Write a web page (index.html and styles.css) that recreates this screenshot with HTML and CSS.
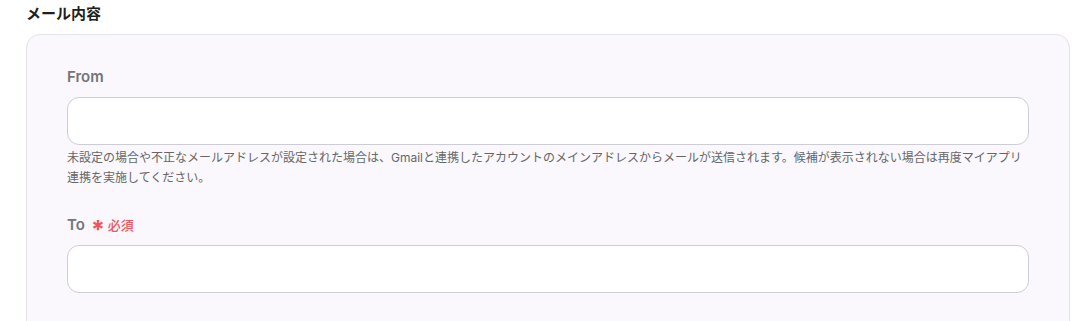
FILE: index.html
```html
<!DOCTYPE html>
<html lang="ja">
<head>
    <meta charset="UTF-8">
    <meta name="viewport" content="width=device-width, initial-scale=1.0">
    <title>メール内容</title>
    <link rel="stylesheet" href="styles.css">
</head>
<body>
    <div class="section">
        <h2 class="section-title">メール内容</h2>
        <div class="card">
            <div class="field">
                <label class="field-label" for="from">From</label>
                <input class="field-input" type="text" id="from">
                <p class="field-help">未設定の場合や不正なメールアドレスが設定された場合は、Gmailと連携したアカウントのメインアドレスからメールが送信されます。候補が表示されない場合は再度マイアプリ連携を実施してください。</p>
            </div>
            <div class="field">
                <label class="field-label" for="to">To <span class="required"><span class="asterisk">*</span>必須</span></label>
                <input class="field-input" type="text" id="to">
            </div>
        </div>
    </div>
</body>
</html>
```

FILE: styles.css
```css
body {
    font-family: Inter, "Noto Sans CJK JP", sans-serif;
    margin: 0;
    padding: 0;
    background-color: #fff;
    color: #222;
}
.section {
    padding: 2px 5px 0 26px;
}
.section-title {
    margin: 0 0 8px;
    font-size: 15px;
    line-height: 24px;
    font-weight: 700;
    color: #1f1f1f;
}
.card {
    background-color: #faf8fc;
    border: 1px solid #e4e2e9;
    border-radius: 14px;
    padding: 32px 40px 40px 40px;
}
.field {
    margin-bottom: 27px;
}
.field-label {
    display: flex;
    align-items: center;
    font-size: 15px;
    line-height: 20px;
    font-weight: 600;
    color: #747479;
    margin-bottom: 10px;
}
.required {
    display: inline-flex;
    align-items: center;
    margin-left: 6px;
    color: #f2545b;
    font-size: 13px;
    font-weight: 500;
}
.asterisk {
    font-size: 25px;
    font-weight: 700;
    line-height: 20px;
    margin-right: 3px;
    position: relative;
    top: 5px;
}
.field-input {
    display: block;
    box-sizing: border-box;
    width: 100%;
    height: 48px;
    border: 1px solid #cdcdd8;
    border-radius: 12px;
    background-color: #fff;
    padding: 0 14px;
    font-family: inherit;
    font-size: 14px;
}
.field-help {
    margin: 3px 0 0;
    font-size: 12px;
    line-height: 20px;
    color: #666;
}
```
